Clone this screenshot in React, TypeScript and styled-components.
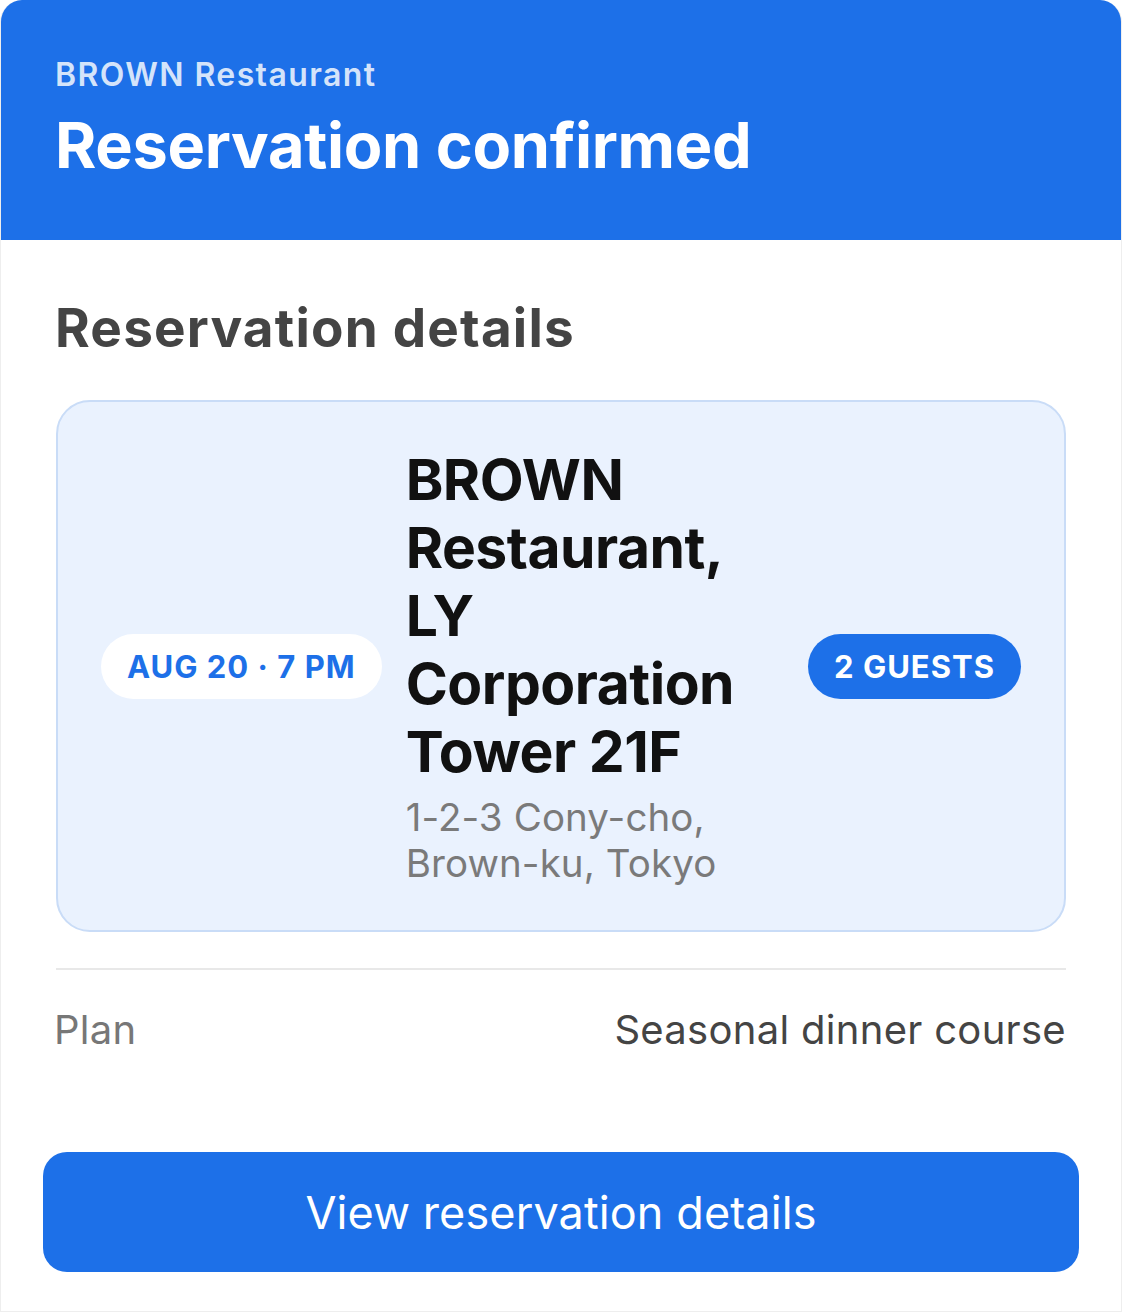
import React from "react";
import styled, { createGlobalStyle } from "styled-components";

const Global = createGlobalStyle`
  html, body { margin: 0; padding: 0; background: #ffffff; }
  body { font-family: Inter, "Noto Sans", sans-serif; -webkit-font-smoothing: antialiased; }
  * { box-sizing: border-box; }
`;

const Bubble = styled.div`
  width: 1122px;
  height: 1312px;
  border-radius: 22px 22px 0 0;
  border: 1px solid #eeeeee;
  border-top: none;
  overflow: hidden;
  display: flex;
  flex-direction: column;
  background: #ffffff;
`;

const Header = styled.header`
  height: 240px;
  background: #1d70e8;
  padding: 56px 54px 0 54px;
  display: flex;
  flex-direction: column;
`;

const Brand = styled.div`
  font-size: 32px;
  font-weight: 600;
  letter-spacing: 1.4px;
  color: rgba(255, 255, 255, 0.82);
  line-height: 38px;
`;

const Title = styled.h1`
  margin: 14px 0 0 0;
  font-size: 63px;
  font-weight: 700;
  color: #ffffff;
  line-height: 74px;
  letter-spacing: -0.3px;
`;

const Body = styled.section`
  padding: 52px 55px 0 55px;
  display: flex;
  flex-direction: column;
`;

const SectionTitle = styled.h2`
  margin: 0 0 0 -1px;
  font-size: 53px;
  font-weight: 700;
  color: #444444;
  line-height: 72px;
  letter-spacing: 1.2px;
`;

const Card = styled.div`
  margin-top: 36px;
  background: #eaf2fe;
  border: 2px solid #c9dcf7;
  border-radius: 34px;
  padding: 44px 43px;
  display: flex;
  align-items: center;
  gap: 26px;
`;

const Pill = styled.div<{ $filled?: boolean }>`
  flex: none;
  height: 65px;
  padding: 0 26px;
  border-radius: 33px;
  display: flex;
  align-items: center;
  font-size: 31px;
  font-weight: 700;
  letter-spacing: 1px;
  white-space: nowrap;
  background: ${(p) => (p.$filled ? "#1d70e8" : "#ffffff")};
  color: ${(p) => (p.$filled ? "#ffffff" : "#1d70e8")};
`;

const Place = styled.div`
  flex: 1;
  min-width: 0;
  display: flex;
  flex-direction: column;
  margin-left: -2px;
`;

const PlaceName = styled.div`
  font-size: 57px;
  font-weight: 700;
  color: #111111;
  line-height: 68px;
  letter-spacing: -0.5px;
`;

const Address = styled.div`
  margin-top: 8px;
  font-size: 38.5px;
  font-weight: 400;
  color: #7a7a7a;
  line-height: 46px;
  letter-spacing: 0.1px;
`;

const Divider = styled.hr`
  margin: 36px 0 0 0;
  border: none;
  height: 2px;
  background: #e8e8e8;
`;

const Row = styled.div`
  margin-top: 34px;
  display: flex;
  justify-content: space-between;
  align-items: center;
  font-size: 40px;
  line-height: 52px;
  letter-spacing: 0.3px;
`;

const Label = styled.span`
  color: #777777;
  margin-left: -2px;
`;

const Value = styled.span`
  color: #444444;
`;

const Footer = styled.div`
  padding: 96px 42px 0 42px;
`;

const Button = styled.button`
  width: 100%;
  height: 120px;
  border: none;
  border-radius: 24px;
  background: #1d70e8;
  color: #ffffff;
  font-family: Inter, "Noto Sans", sans-serif;
  font-size: 45px;
  font-weight: 400;
  letter-spacing: 0.1px;
  cursor: pointer;
`;

export default function App() {
  return (
    <>
      <Global />
      <Bubble>
        <Header>
          <Brand>BROWN Restaurant</Brand>
          <Title>Reservation confirmed</Title>
        </Header>
        <Body>
          <SectionTitle>Reservation details</SectionTitle>
          <Card>
            <Pill>AUG 20 · 7 PM</Pill>
            <Place>
              <PlaceName>BROWN Restaurant, LY Corporation Tower 21F</PlaceName>
              <Address>1-2-3 Cony-cho, Brown-ku, Tokyo</Address>
            </Place>
            <Pill $filled>2 GUESTS</Pill>
          </Card>
          <Divider />
          <Row>
            <Label>Plan</Label>
            <Value>Seasonal dinner course</Value>
          </Row>
        </Body>
        <Footer>
          <Button>View reservation details</Button>
        </Footer>
      </Bubble>
    </>
  );
}
